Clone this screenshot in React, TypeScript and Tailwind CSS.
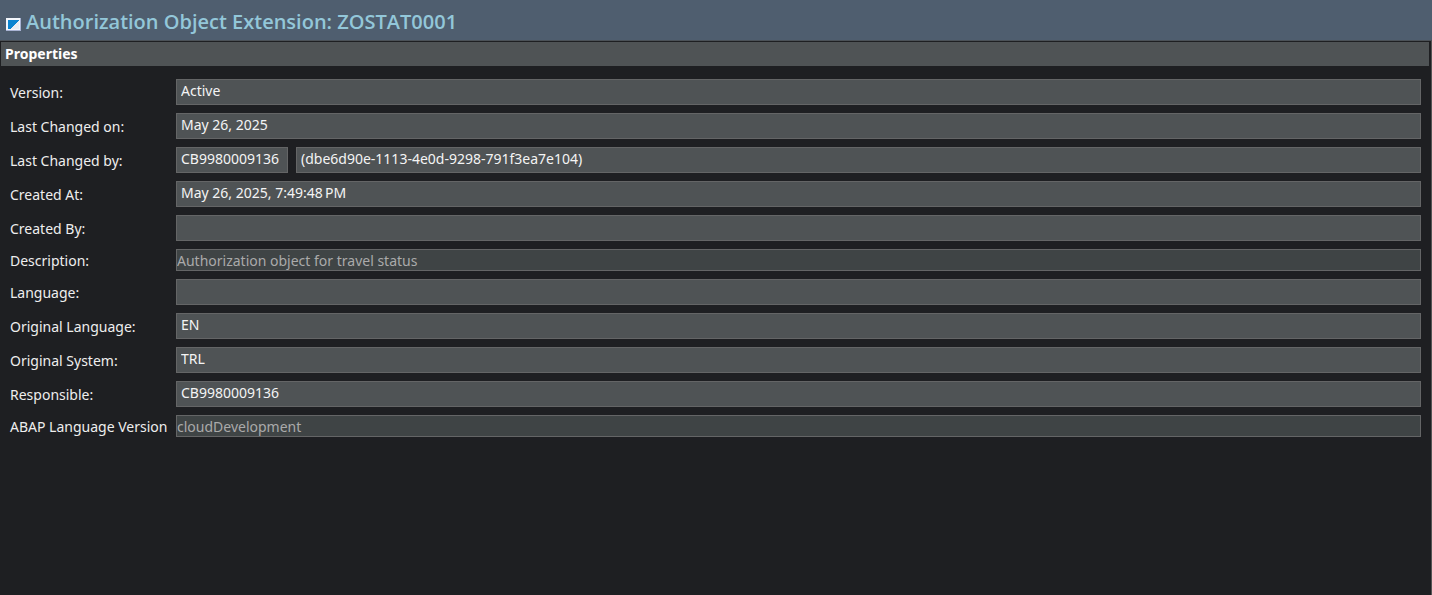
import { useId } from "react";

type Field = {
  label: string;
  value: string;
  disabled?: boolean;
  detail?: { label: string; value: string };
};

const fields: Field[] = [
  { label: "Version:", value: "Active" },
  { label: "Last Changed on:", value: "May 26, 2025" },
  {
    label: "Last Changed by:",
    value: "CB9980009136",
    detail: { label: "User ID", value: "(dbe6d90e-1113-4e0d-9298-791f3ea7e104)" },
  },
  { label: "Created At:", value: "May 26, 2025, 7:49:48\u202fPM" },
  { label: "Created By:", value: "" },
  { label: "Description:", value: "Authorization object for travel status", disabled: true },
  { label: "Language:", value: "" },
  { label: "Original Language:", value: "EN" },
  { label: "Original System:", value: "TRL" },
  { label: "Responsible:", value: "CB9980009136" },
  { label: "ABAP Language Version", value: "cloudDevelopment", disabled: true },
];

const readOnlyStyle =
  "h-[26px] min-w-0 border border-[#646566] bg-[#4f5355] px-1 pb-1 text-[#f4f4f4] outline-none";
const disabledStyle =
  "h-[22px] min-w-0 flex-1 border border-[#646566] bg-[#3f4445] text-[#aaaaaa] outline-none";

function ObjectIcon() {
  return (
    <svg width="15" height="13" viewBox="0 0 15 13" shapeRendering="crispEdges" aria-hidden="true">
      <rect width="15" height="13" fill="#a9b3d3" />
      <rect width="14" height="12" fill="#f3f6fb" />
      <rect x="2" y="2" width="11" height="9" fill="#e9edf2" />
      <path d="M2 2H13L4 11H2Z" fill="#0a84d0" />
    </svg>
  );
}

function PropertyRow({ field }: { field: Field }) {
  const id = useId();
  return (
    <div className="flex items-center gap-2">
      <label
        htmlFor={id}
        className="w-[158px] shrink-0 whitespace-nowrap pt-0.5 leading-5 text-[#eeeeee]"
      >
        {field.label}
      </label>
      {field.disabled ? (
        <input id={id} className={disabledStyle} value={field.value} disabled />
      ) : (
        <input
          id={id}
          className={`${readOnlyStyle} ${field.detail ? "w-28" : "flex-1"}`}
          value={field.value}
          readOnly
        />
      )}
      {field.detail && (
        <input
          className={`${readOnlyStyle} flex-1`}
          aria-label={field.detail.label}
          value={field.detail.value}
          readOnly
        />
      )}
    </div>
  );
}

export default function App() {
  return (
    <div className="flex min-h-screen flex-col bg-[#1e1f22] font-['Noto_Sans',sans-serif] text-sm">
      <header className="flex h-[41px] items-end gap-1 border-b border-[#4b5157] bg-[#4f5e6f] pb-[9px] pl-1.5">
        <ObjectIcon />
        <h1 className="pl-px font-['Open_Sans',sans-serif] text-xl font-[650] leading-[18px] text-[#93c7d9]">
          Authorization Object Extension: ZOSTAT0001
        </h1>
      </header>
      <main className="flex-1 border-r border-[#555555] pt-px">
        <h2 className="ml-px mr-0.5 bg-[#4f5355] px-1 font-bold leading-6 text-white">
          Properties
        </h2>
        <form className="flex flex-col gap-2 px-2.5 pt-[13px]">
          {fields.map((field) => (
            <PropertyRow key={field.label} field={field} />
          ))}
        </form>
      </main>
    </div>
  );
}
